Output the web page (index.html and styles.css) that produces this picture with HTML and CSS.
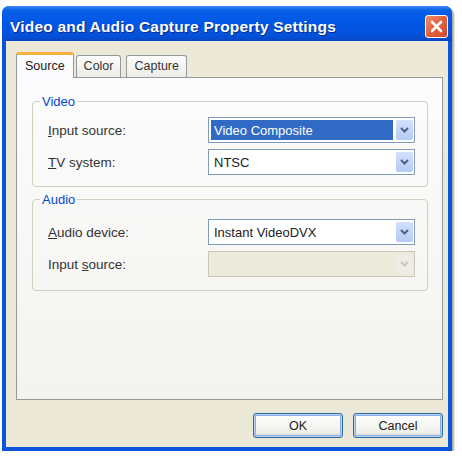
FILE: index.html
```html
<!DOCTYPE html>
<html>
<head>
<meta charset="utf-8">
<link rel="stylesheet" href="styles.css">
</head>
<body>
<div class="window">
  <div class="titlebar">
    <span class="title">Video and Audio Capture Property Settings</span>
    <span class="close"><svg width="21" height="21" viewBox="0 0 21 21"><path d="M6 6 L15 15 M15 6 L6 15" stroke="#fff" stroke-width="2.6" stroke-linecap="round"/></svg></span>
  </div>
  <div class="client">
    <div class="tabs">
      <div class="tab active">Source</div>
      <div class="tab">Color</div>
      <div class="tab">Capture</div>
    </div>
    <div class="panel">
      <fieldset class="group group-video">
        <legend>Video</legend>
        <div class="row">
          <span class="label"><u>I</u>nput source:</span>
          <div class="combo">
            <span class="value selected">Video Composite</span>
            <span class="drop"><svg width="9" height="6" viewBox="0 0 9 6"><path d="M1 1 L4.5 4.5 L8 1" fill="none" stroke="#4D6185" stroke-width="2"/></svg></span>
          </div>
        </div>
        <div class="row">
          <span class="label"><u>T</u>V system:</span>
          <div class="combo">
            <span class="value">NTSC</span>
            <span class="drop"><svg width="9" height="6" viewBox="0 0 9 6"><path d="M1 1 L4.5 4.5 L8 1" fill="none" stroke="#4D6185" stroke-width="2"/></svg></span>
          </div>
        </div>
      </fieldset>
      <fieldset class="group group-audio">
        <legend>Audio</legend>
        <div class="row">
          <span class="label"><u>A</u>udio device:</span>
          <div class="combo">
            <span class="value">Instant VideoDVX</span>
            <span class="drop"><svg width="9" height="6" viewBox="0 0 9 6"><path d="M1 1 L4.5 4.5 L8 1" fill="none" stroke="#4D6185" stroke-width="2"/></svg></span>
          </div>
        </div>
        <div class="row">
          <span class="label">Input <u>s</u>ource:</span>
          <div class="combo disabled">
            <span class="value"></span>
            <span class="drop"><svg width="9" height="6" viewBox="0 0 9 6"><path d="M1 1 L4.5 4.5 L8 1" fill="none" stroke="#C9C7BA" stroke-width="2"/></svg></span>
          </div>
        </div>
      </fieldset>
    </div>
    <div class="buttons">
      <button class="btn default">OK</button>
      <button class="btn">Cancel</button>
    </div>
  </div>
</div>
</body>
</html>
```

FILE: styles.css
```css
html, body {
  margin: 0;
  padding: 0;
  background: #ffffff;
}

body {
  font-family: "Liberation Sans", Arial, sans-serif;
  font-size: 13px;
  color: #1d1d1d;
}

.window {
  margin: 6px 0 0 2px;
  width: 450px;
  height: 445px;
  box-sizing: border-box;
  background: #0A55DC;
  border-radius: 7px 7px 0 0;
  display: flex;
  flex-direction: column;
  box-shadow: 2px 2px 2px rgba(0,0,0,0.35);
}

.titlebar {
  height: 35px;
  box-sizing: border-box;
  padding: 9px 4px 3px 8px;
  display: flex;
  align-items: center;
  justify-content: space-between;
  border-radius: 7px 7px 0 0;
  background: linear-gradient(#3D8CF6 0%, #0A60E8 12%, #0057E6 45%, #0451DA 85%, #0747C4 100%);
}

.title {
  color: #ffffff;
  font-weight: bold;
  font-size: 15.5px;
  letter-spacing: 0.2px;
  text-shadow: 1px 1px 0 #0A2A8A;
  white-space: nowrap;
}

.close {
  width: 23px;
  height: 23px;
  box-sizing: border-box;
  border: 1px solid #ffffff;
  border-radius: 3px;
  background: linear-gradient(135deg, #F08C6C 0%, #E4643E 45%, #D24A28 100%);
  display: flex;
  align-items: center;
  justify-content: center;
}

.client {
  flex: 1;
  margin: 0 4px 4px 4px;
  background: #ECE9D8;
  padding: 11px 5px 9px 10px;
  display: flex;
  flex-direction: column;
}

.tabs {
  display: flex;
  align-items: flex-end;
  height: 25px;
  gap: 2px;
  position: relative;
  z-index: 1;
}

.tab {
  height: 22px;
  box-sizing: border-box;
  padding: 3px 7px 0 7px;
  font-size: 12.5px;
  color: #333;
  border: 1px solid #919B9C;
  border-bottom: none;
  border-radius: 3px 3px 0 0;
  background: linear-gradient(#FEFEFE, #ECEBE6);
}

.tab.active {
  height: 26px;
  margin-bottom: -1px;
  padding: 4px 8px 0 8px;
  border-top: 3px solid #F6B23C;
  background: #FCFCFE;
  color: #222;
}

.tab:nth-child(3) {
  margin-left: 3px;
}

.panel {
  height: 323px;
  box-sizing: border-box;
  border: 1px solid #919B9C;
  background: linear-gradient(#FCFCFE, #F4F3EE);
  padding: 16px 15px 0 15px;
}

.group {
  margin: 0;
  border: 1px solid #D0D0BF;
  border-radius: 4px;
  padding: 8px 12px 11px 15px;
  display: flex;
  flex-direction: column;
  gap: 6px;
}

.group legend {
  color: #0046D5;
  padding: 0 2px;
  margin-left: -8px;
  font-size: 13px;
}

.group-audio {
  margin-top: 5px;
  padding-top: 12px;
  padding-bottom: 13px;
}

.row {
  display: flex;
  align-items: center;
  height: 26px;
}

.label {
  width: 160px;
  font-size: 13.5px;
  color: #333333;
}

.combo {
  width: 207px;
  height: 26px;
  box-sizing: border-box;
  border: 1px solid #7F9DB9;
  background: #ffffff;
  display: flex;
  align-items: stretch;
  padding: 2px 1px 2px 2px;
  gap: 3px;
}

.value {
  flex: 1;
  display: flex;
  align-items: center;
  padding-left: 3px;
  color: #222;
}

.value.selected {
  background: #316AC5;
  color: #ffffff;
}

.drop {
  width: 17px;
  border-radius: 2px;
  background: linear-gradient(#D2E0FC, #B6CAF6);
  display: flex;
  align-items: center;
  justify-content: center;
}

.combo.disabled {
  border-color: #C9C7BA;
  background: #EBEADB;
}

.combo.disabled .drop {
  background: #EEEDE5;
}

.buttons {
  margin-top: 13px;
  display: flex;
  justify-content: flex-end;
  gap: 10px;
}

.btn {
  width: 90px;
  height: 25px;
  box-sizing: border-box;
  border: 1px solid #2E6A9E;
  border-radius: 3px;
  background: linear-gradient(#FFFFFF, #F0F0EA 80%, #D6D0C5);
  font-family: "Liberation Sans", Arial, sans-serif;
  font-size: 12.5px;
  color: #222;
  box-shadow: inset 0 0 0 1px #B9D1F2, inset 0 0 0 2px #8AB0E8;
  padding: 0;
}
```
